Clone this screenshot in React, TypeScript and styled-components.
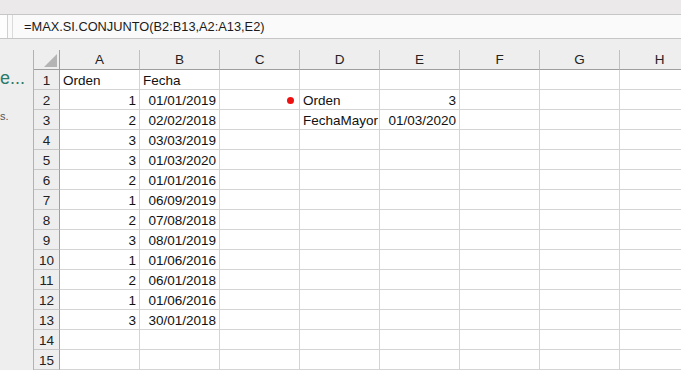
import React from 'react';
import styled, { createGlobalStyle } from 'styled-components';

const columns = ['A', 'B', 'C', 'D', 'E', 'F', 'G', 'H'];

const data: [number, string][] = [
  [1, '01/01/2019'],
  [2, '02/02/2018'],
  [3, '03/03/2019'],
  [3, '01/03/2020'],
  [2, '01/01/2016'],
  [1, '06/09/2019'],
  [2, '07/08/2018'],
  [3, '08/01/2019'],
  [1, '01/06/2016'],
  [2, '06/01/2018'],
  [1, '01/06/2016'],
  [3, '30/01/2018'],
];

type Cell = { text?: string; align?: 'left' | 'right'; dot?: boolean };

// builds the 15 visible rows of the sheet
const buildRows = (): Cell[][] => {
  const rows: Cell[][] = [];
  for (let r = 1; r <= 15; r++) {
    const row: Cell[] = columns.map(() => ({}));
    if (r === 1) {
      row[0] = { text: 'Orden' };
      row[1] = { text: 'Fecha' };
    } else if (r <= 13) {
      const [orden, fecha] = data[r - 2];
      row[0] = { text: String(orden), align: 'right' };
      row[1] = { text: fecha, align: 'right' };
    }
    if (r === 2) {
      row[2] = { dot: true };
      row[3] = { text: 'Orden' };
      row[4] = { text: '3', align: 'right' };
    }
    if (r === 3) {
      row[3] = { text: 'FechaMayor' };
      row[4] = { text: '01/03/2020', align: 'right' };
    }
    rows.push(row);
  }
  return rows;
};

const App: React.FC = () => {
  const rows = buildRows();

  return (
    <>
      <GlobalStyle />
      <Window>
        <TopStrip />
        <FormulaBar>
          <NameBox />
          <FormulaInput>=MAX.SI.CONJUNTO(B2:B13,A2:A13,E2)</FormulaInput>
        </FormulaBar>
        <Body>
          <SidePanel>
            <PanelTitle>e...</PanelTitle>
            <PanelNote>s.</PanelNote>
          </SidePanel>
          <SheetArea>
            <Grid>
              <Corner>
                <svg width="13" height="13" viewBox="0 0 13 13">
                  <polygon points="13,0 13,13 0,13" fill="#b4b4b4" />
                </svg>
              </Corner>
              {columns.map(c => (
                <ColHeader key={c}>{c}</ColHeader>
              ))}
              {rows.map((row, i) => (
                <React.Fragment key={i}>
                  <RowHeader>{i + 1}</RowHeader>
                  {row.map((cell, j) => (
                    <DataCell key={j} $align={cell.align || 'left'}>
                      {cell.dot && <RedDot />}
                      {cell.text}
                    </DataCell>
                  ))}
                </React.Fragment>
              ))}
            </Grid>
          </SheetArea>
        </Body>
      </Window>
    </>
  );
};

const GlobalStyle = createGlobalStyle`
  html, body {
    margin: 0;
    padding: 0;
    background: #ffffff;
    overflow: hidden;
  }
`;

const Window = styled.div`
  width: 681px;
  height: 370px;
  overflow: hidden;
  background: #efeeee;
  display: flex;
  flex-direction: column;
`;

const TopStrip = styled.div`
  height: 14px;
  flex-shrink: 0;
  background: #ebe9ea;
  border-bottom: 1px solid #c6c6c6;
`;

const FormulaBar = styled.div`
  height: 23px;
  flex-shrink: 0;
  display: flex;
  background: #fafafa;
  border-bottom: 1px solid #c6c6c6;
`;

const NameBox = styled.div`
  width: 7px;
  border-right: 1px solid #d0d0d0;
  background: #fdfdfd;
`;

const FormulaInput = styled.div`
  flex: 1;
  margin-left: 4px;
  border-left: 1px solid #dadada;
  padding-left: 11px;
  display: flex;
  align-items: center;
  font-family: 'Liberation Sans', Arial, sans-serif;
  font-size: 12.8px;
  color: #1a1a1a;
`;

const Body = styled.div`
  flex: 1;
  display: flex;
  min-height: 0;
`;

const SidePanel = styled.div`
  width: 33px;
  flex-shrink: 0;
  background: #efeeee;
  position: relative;
  overflow: hidden;
`;

const PanelTitle = styled.div`
  position: absolute;
  left: 0;
  top: 29px;
  font-family: 'Liberation Sans', Arial, sans-serif;
  font-size: 18px;
  color: #2b7a6a;
  white-space: nowrap;
`;

const PanelNote = styled.div`
  position: absolute;
  left: 0;
  top: 71px;
  font-family: 'Liberation Sans', Arial, sans-serif;
  font-size: 11px;
  color: #555;
`;

const SheetArea = styled.div`
  flex: 1;
  padding-top: 11px;
  overflow: hidden;
`;

const Grid = styled.div`
  display: grid;
  grid-template-columns: 26px repeat(8, 80px);
  grid-auto-rows: 20px;
  grid-template-rows: 20px;
  border-left: 1px solid #b2b2b2;
  background: #ffffff;
  width: max-content;
`;

const HeaderBase = styled.div`
  background: #efeeee;
  color: #222;
  font-family: 'Liberation Sans', Arial, sans-serif;
  font-size: 13.5px;
  display: flex;
  align-items: center;
  justify-content: center;
  box-sizing: border-box;
`;

const Corner = styled(HeaderBase)`
  border-right: 1px solid #9e9e9e;
  border-bottom: 1px solid #9e9e9e;
  align-items: flex-end;
  justify-content: flex-end;
  padding: 0 2px 2px 0;
`;

const ColHeader = styled(HeaderBase)`
  border-right: 1px solid #c0c0c0;
  border-bottom: 1px solid #9e9e9e;
`;

const RowHeader = styled(HeaderBase)`
  border-right: 1px solid #9e9e9e;
  border-bottom: 1px solid #c8c8c8;
  padding-top: 1px;
`;

const DataCell = styled.div<{ $align: 'left' | 'right' }>`
  box-sizing: border-box;
  border-right: 1px solid #d4d4d4;
  border-bottom: 1px solid #d4d4d4;
  padding: 1px 3px 0 3px;
  display: flex;
  align-items: center;
  justify-content: ${p => (p.$align === 'right' ? 'flex-end' : 'flex-start')};
  font-family: 'Liberation Sans', Arial, sans-serif;
  font-size: 13.5px;
  color: #111;
  white-space: nowrap;
  overflow: visible;
`;

const RedDot = styled.span`
  width: 7px;
  height: 7px;
  border-radius: 50%;
  background: #ee1111;
  margin-left: auto;
  margin-right: 2px;
`;

export default App;
